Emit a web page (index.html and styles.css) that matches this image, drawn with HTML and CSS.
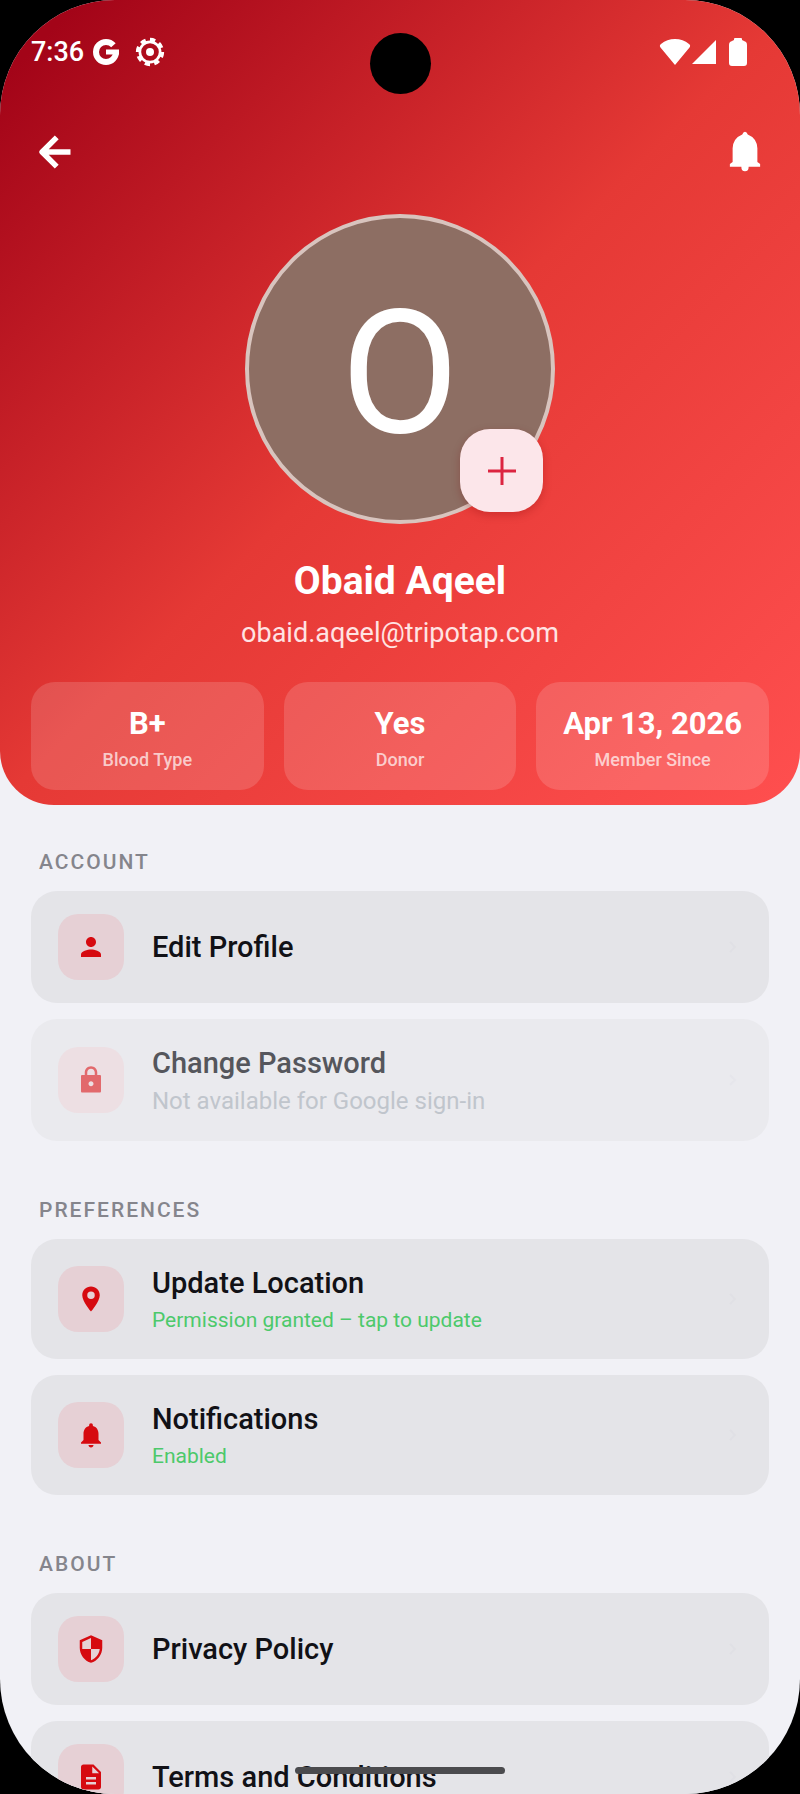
FILE: index.html
```html
<!DOCTYPE html>
<html lang="en">

<head>
    <meta charset="UTF-8">
    <meta name="viewport" content="width=device-width, initial-scale=1.0">
    <title>Profile</title>
    <link rel="stylesheet" href="styles.css">
</head>

<body>
    <div class="phone">
        <header class="header">
            <div class="statusbar">
                <span class="time">7:36</span>
                <svg class="status-g" width="28" height="28" viewBox="0 0 28 28" fill="none" stroke="#fff" stroke-width="6">
                    <circle cx="14" cy="14" r="10" pathLength="360" stroke-dasharray="318 42" />
                    <path d="M14 14h13" stroke-width="5" />
                </svg>
                <svg class="status-gear" width="32" height="32" viewBox="0 0 24 24" fill="none" stroke="#fff">
                    <circle cx="12" cy="12" r="9.300" pathLength="80" stroke-width="2.600" stroke-dasharray="5.500 4.500" />
                    <circle cx="12" cy="12" r="7.600" stroke-width="2" />
                    <circle cx="12" cy="12" r="3" fill="#fff" stroke="none" />
                </svg>
                <span class="status-right">
                    <svg width="32" height="28" viewBox="0 0 32 28" fill="#fff"><path d="M16 27 1.500 9.500Q0 7.500 2 6 8 1 16 1T30 6Q32 7.500 30.500 9.500Z" /></svg>
                    <svg width="26" height="28" viewBox="0 0 26 28" fill="#fff"><path d="M25 2V26H1Z" /></svg>
                    <svg class="battery" width="20" height="28" viewBox="0 0 20 28" fill="#fff"><path d="M6 2V1q0-1 1-1h6q1 0 1 1v1l4 2q1 1 1 3v18q0 3-3 3H4q-3 0-3-3V7q0-2 1-3Z" /></svg>
                </span>
            </div>

            <div class="appbar">
                <button class="icon-btn" type="button" aria-label="Back">
                    <svg width="48" height="48" viewBox="0 0 48 48" fill="none" stroke="#fff" stroke-width="6" stroke-linejoin="round"><path d="M42 24H11M27 8 11 24l16 16" /></svg>
                </button>
                <button class="icon-btn" type="button" aria-label="Notifications">
                    <svg width="48" height="48" viewBox="0 0 48 48" fill="#fff"><path d="M24 2q2 0 3 3 10 4 10.500 15v15l3 2v3H28q0 5-4 5t-4-5H7.500v-3l3-2V20Q11 9 21 5q1-3 3-3Z" /></svg>
                </button>
            </div>

            <div class="avatar">
                <span>O</span>
                <button class="avatar-add" type="button" aria-label="Change photo">
                    <svg width="28" height="28" viewBox="0 0 28 28" stroke="#dc2440" stroke-width="3"><path d="M14 0v28M0 14h28" /></svg>
                </button>
            </div>

            <h1 class="name">Obaid Aqeel</h1>
            <p class="email">obaid.aqeel@tripotap.com</p>

            <div class="stats">
                <div class="stat"><strong>B+</strong><span>Blood Type</span></div>
                <div class="stat"><strong>Yes</strong><span>Donor</span></div>
                <div class="stat"><strong>Apr 13, 2026</strong><span>Member Since</span></div>
            </div>
        </header>

        <main class="content">
            <section class="group">
                <h2>ACCOUNT</h2>
                <button class="row" type="button">
                    <span class="tile"><svg viewBox="0 0 24 24"><path d="M12 12c2.200 0 4-1.800 4-4s-1.800-4-4-4-4 1.800-4 4 1.800 4 4 4zm0 2c-2.700 0-8 1.300-8 4v2h16v-2c0-2.700-5.300-4-8-4z" /></svg></span>
                    <span class="row-text"><span class="title">Edit Profile</span></span>
                    <svg class="chevron" viewBox="0 0 8 12"><path d="M1 1l5 5-5 5" /></svg>
                </button>
                <button class="row" type="button" disabled>
                    <span class="tile"><svg viewBox="0 0 24 24"><path fill-rule="evenodd" d="M19 8h-2V6c0-2.800-2.200-5-5-5S7 3.200 7 6v2H5c-.6 0-1 .4-1 1v12c0 .6.4 1 1 1h14c.6 0 1-.4 1-1V9c0-.6-.4-1-1-1zm-7 9c-1.100 0-2-.9-2-2s.9-2 2-2 2 .9 2 2-.9 2-2 2zm3-9H9V6c0-1.700 1.300-3 3-3s3 1.300 3 3v2z" /></svg></span>
                    <span class="row-text">
                        <span class="title">Change Password</span>
                        <span class="sub">Not available for Google sign-in</span>
                    </span>
                    <svg class="chevron" viewBox="0 0 8 12"><path d="M1 1l5 5-5 5" /></svg>
                </button>
            </section>

            <section class="group">
                <h2>PREFERENCES</h2>
                <button class="row" type="button">
                    <span class="tile"><svg viewBox="0 0 24 24"><path d="M12 2C8.100 2 5 5.100 5 9c0 5.200 7 13 7 13s7-7.800 7-13c0-3.900-3.100-7-7-7zm0 10a3 3 0 1 1 0-6 3 3 0 0 1 0 6z" /></svg></span>
                    <span class="row-text">
                        <span class="title">Update Location</span>
                        <span class="sub on">Permission granted – tap to update</span>
                    </span>
                    <svg class="chevron" viewBox="0 0 8 12"><path d="M1 1l5 5-5 5" /></svg>
                </button>
                <button class="row" type="button">
                    <span class="tile"><svg viewBox="0 0 24 24"><path d="M12 22c1.100 0 2-.9 2-2h-4c0 1.100.9 2 2 2zm6-6v-5c0-3.100-1.600-5.600-4.500-6.300V4a1.500 1.500 0 0 0-3 0v.7C7.600 5.400 6 7.900 6 11v5l-2 2v1h16v-1l-2-2z" /></svg></span>
                    <span class="row-text">
                        <span class="title">Notifications</span>
                        <span class="sub on">Enabled</span>
                    </span>
                    <svg class="chevron" viewBox="0 0 8 12"><path d="M1 1l5 5-5 5" /></svg>
                </button>
            </section>

            <section class="group">
                <h2>ABOUT</h2>
                <button class="row" type="button">
                    <span class="tile"><svg viewBox="0 0 24 24"><path d="M12 1 3 5v6c0 5.500 3.800 10.700 9 12 5.200-1.300 9-6.500 9-12V5l-9-4zm0 11h7c-.5 4.100-3.300 7.800-7 8.900V12H5V6.300l7-3.100V12z" /></svg></span>
                    <span class="row-text"><span class="title">Privacy Policy</span></span>
                    <svg class="chevron" viewBox="0 0 8 12"><path d="M1 1l5 5-5 5" /></svg>
                </button>
                <button class="row" type="button">
                    <span class="tile"><svg viewBox="0 0 24 24"><path d="M14 2H6c-1.100 0-2 .9-2 2v16c0 1.100.9 2 2 2h12c1.100 0 2-.9 2-2V8l-6-6zm2 16H8v-2h8v2zm0-4H8v-2h8v2zm-3-5V3.500L18.500 9H13z" /></svg></span>
                    <span class="row-text"><span class="title">Terms and Conditions</span></span>
                    <svg class="chevron" viewBox="0 0 8 12"><path d="M1 1l5 5-5 5" /></svg>
                </button>
            </section>
        </main>

        <div class="camera"></div>
        <div class="home-bar"></div>
    </div>
</body>

</html>
```
FILE: styles.css
```css
* {
    box-sizing: border-box;
}

body {
    margin: 0;
    background-color: #000;
    font-family: Roboto, "Liberation Sans", sans-serif;
    color: #111116;
}

h1, h2, p {
    margin: 0;
}

button {
    border: none;
    padding: 0;
    font-family: inherit;
    cursor: pointer;
}

svg {
    display: block;
    flex-shrink: 0;
}

.phone {
    position: relative;
    height: 100vh;
    overflow: hidden;
    border-radius: 115px;
    background-color: #f1f1f6;
}

/* header */

.header {
    display: flex;
    flex-direction: column;
    align-items: center;
    padding: 32px 31px 15px;
    border-radius: 0 0 54px 54px;
    background: linear-gradient(135deg, #a30418 5%, #e53935 50%, #ff4f4f 100%);
    color: #fff;
}

.statusbar {
    display: flex;
    align-items: center;
    width: 100%;
    height: 40px;
}

.time {
    font-size: 27px;
    font-weight: 500;
}

.status-g {
    margin-left: 8px;
}

.status-gear {
    margin-left: 14px;
}

.status-right {
    display: flex;
    align-items: center;
    margin-left: auto;
    margin-right: 21px;
}

.battery {
    margin-left: 11px;
}

.appbar {
    display: flex;
    justify-content: space-between;
    width: 100%;
    margin: 60px 0 42px;
    padding: 0 4px 0 3px;
}

.icon-btn {
    width: 40px;
    height: 40px;
    display: flex;
    align-items: center;
    justify-content: center;
    background: none;
}

.icon-btn svg {
    width: 44px;
    height: 44px;
}

.avatar {
    position: relative;
    display: flex;
    align-items: center;
    justify-content: center;
    width: 310px;
    height: 310px;
    padding-top: 8px;
    border: 4px solid #d8c4be;
    border-radius: 50%;
    background-color: #8d6e63;
    font-size: 172px;
    line-height: 1;
}

.avatar-add {
    position: absolute;
    right: 8px;
    bottom: 8px;
    display: flex;
    align-items: center;
    justify-content: center;
    width: 83px;
    height: 83px;
    border-radius: 30px;
    background-color: #fce6ea;
    box-shadow: 0 3px 8px rgba(120, 0, 0, 0.25);
}

.name {
    margin-top: 33px;
    font-size: 39px;
    line-height: 48px;
    font-weight: 700;
}

.email {
    margin: 12px 0 33px;
    font-size: 27px;
    line-height: 32px;
    color: #ffe3e3;
}

.stats {
    display: grid;
    grid-template-columns: repeat(3, 1fr);
    gap: 20px;
    width: 100%;
}

.stat {
    display: flex;
    flex-direction: column;
    align-items: center;
    padding: 18px 0;
    border-radius: 24px;
    background-color: rgba(255, 255, 255, 0.15);
}

.stat strong {
    font-size: 31px;
    line-height: 48px;
}

.stat span {
    font-size: 18px;
    line-height: 24px;
    font-weight: 500;
    color: rgba(255, 255, 255, 0.7);
}

/* settings list */

.content {
    padding: 44px 31px 0;
}

.group {
    display: flex;
    flex-direction: column;
    gap: 16px;
    margin-bottom: 56px;
}

.group h2 {
    padding-left: 8px;
    font-size: 21px;
    line-height: 26px;
    font-weight: 500;
    letter-spacing: 2px;
    color: #85858c;
}

.row {
    display: flex;
    align-items: center;
    gap: 28px;
    padding: 23px 32px 23px 27px;
    border-radius: 26px;
    background-color: #e4e4e8;
    color: #111116;
    text-align: left;
}

.tile {
    display: flex;
    align-items: center;
    justify-content: center;
    width: 66px;
    height: 66px;
    border-radius: 20px;
    background-color: #e6d0d5;
}

.tile svg {
    width: 30px;
    height: 30px;
    fill: #d60a10;
}

.row-text {
    flex: 1;
    display: flex;
    flex-direction: column;
}

.title {
    font-size: 29px;
    line-height: 42px;
    font-weight: 500;
}

.sub {
    font-size: 24px;
    line-height: 34px;
    color: #c0c5cc;
}

.sub.on {
    font-size: 21px;
    line-height: 32px;
    color: #4cc96b;
}

.chevron {
    width: 8px;
    height: 12px;
    fill: none;
    stroke: #e0e0e5;
    stroke-width: 2;
}

.row:disabled {
    background-color: #eaeaee;
    color: #55565c;
    cursor: default;
}

.row:disabled .tile {
    background-color: #eddfe3;
}

.row:disabled .tile svg {
    fill: #e2696c;
}

.row:disabled .chevron {
    stroke: #e6e6eb;
}

/* device overlays */

.camera {
    position: absolute;
    top: 33px;
    left: 50%;
    width: 61px;
    height: 61px;
    margin-left: -30px;
    border-radius: 50%;
    background-color: #000;
}

.home-bar {
    position: absolute;
    bottom: 20px;
    left: 50%;
    width: 210px;
    height: 7px;
    margin-left: -105px;
    border-radius: 4px;
    background-color: #4b4b4e;
}
```
